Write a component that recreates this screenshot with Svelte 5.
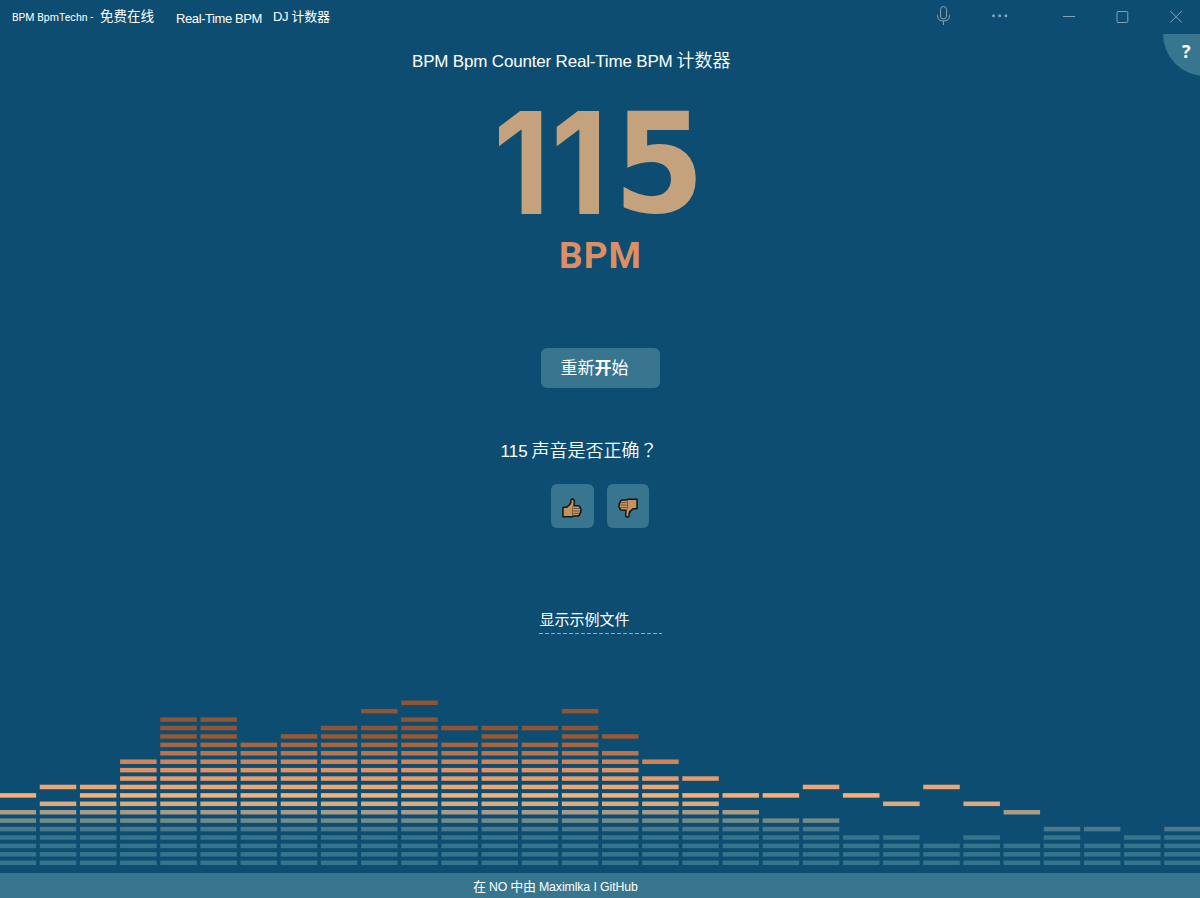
<script>
  const pitch = 40.16;
  const rowPitch = 8.42;
  // [filled rows, peak row]
  const levels = [
    [6, 8], [7, 9], [9, 9], [12, 12], [17, 17], [17, 17], [14, 14], [15, 15], [16, 16], [16, 18],
    [17, 19], [14, 16], [16, 16], [14, 16], [16, 18], [13, 15], [10, 12], [8, 10], [6, 8], [5, 8],
    [5, 9], [3, 8], [3, 7], [2, 9], [3, 7], [2, 6], [4, 4], [2, 4], [3, 3], [4, 4]
  ].map(([fill, peak], c) => [c === 16 ? 10 : c === 17 ? 8 : fill, peak]);
  const colors = [
    '#36748d', '#36748d', '#36748d', '#36748d', '#49798a', '#728b88', '#a89c86', '#dcaa7e', '#f7af78', '#efa673',
    '#e79c6b', '#df9263', '#d28456', '#bd7349', '#a9633e', '#975833', '#925432', '#915330', '#915330', '#915330'
  ];
  const cells = levels.flatMap(([fill, peak], c) =>
    colors.map((color, r) => ({ color, r, x: -0.4 + c * pitch, y: 860.5 - 690 - r * rowPitch }))
      .filter(({ r }) => r <= fill || r === peak)
  );
</script>

{#snippet thumb()}
  <path d="M1 9.3H4.6Q8.3 7 8.9 4.5V2Q9 .9 10.3 .9Q12.4 1 12.4 3.6L11.9 7.8H16Q18.5 8 18 10Q19.8 11 18.7 12.9Q19.3 14.4 17.8 15.4Q18 17.6 16 18H11.5L10 18.8H1Z" fill="#c4935f" stroke="#101719" stroke-width="1.5" stroke-linejoin="round" />
  <path d="M10.5 9V17.6M11.3 10.5H17M11.3 13H17.7M11.3 15.4H16.8" fill="none" stroke="#72533e" stroke-width=".9" />
{/snippet}

<div class="app">
  <header class="titlebar">
    <div class="caption">
      <span class="t1">BPM BpmTechn -</span>
      <span class="t2">免费在线</span>
      <span class="t3">Real-Time BPM</span>
      <span class="t4">DJ 计数器</span>
    </div>
    <svg class="controls" width="270" height="34" fill="none" stroke="#7fa5b9" stroke-width="1">
      <rect x="10.5" y="6.5" width="6" height="12.5" rx="3" />
      <path d="M7.5 14.5v1q0 5.5 6 5.5t6-5.5v-1M13.5 21v4" />
      <g fill="#7fa5b9" stroke="none">
        <circle cx="63.5" cy="15.7" r="1.5" /><circle cx="69.7" cy="15.7" r="1.5" /><circle cx="75.9" cy="15.7" r="1.5" />
      </g>
      <path d="M133 16.5h12" />
      <rect x="187" y="11.5" width="10.8" height="11" rx="1" />
      <path d="M240.3 11l11.5 11.5M251.8 11l-11.5 11.5" />
    </svg>
  </header>
  <button class="help" aria-label="?"><span>?</span></button>

  <main>
    <h1><span class="h-latin">BPM Bpm Counter Real-Time BPM</span><span class="h-cjk">计数器</span></h1>
    <div class="value"><span class="ones">11</span><span class="five">5</span></div>
    <div class="unit">BPM</div>
    <button class="restart">重新<b>开</b>始</button>
    <p class="question"><span>115</span><span class="q-cjk">声音是否正确<i>？</i></span></p>
    <div class="votes">
      <button aria-label="👍"><svg width="20" height="20" viewBox="0 0 20 20">{@render thumb()}</svg></button>
      <button aria-label="👎"><svg class="down" width="20" height="20" viewBox="0 0 20 20">{@render thumb()}</svg></button>
    </div>
    <a class="samples" href="#samples">显示示例文件</a>
  </main>

  <svg class="equalizer" width="1200" height="183">
    {#each cells as cell}
      <rect x={cell.x} y={cell.y} width="36.5" height="4.5" fill={cell.color} />
    {/each}
  </svg>
  <footer><span class="cjk">在</span><span>NO</span><span class="cjk">中由</span><span>Maximlka I GitHub</span></footer>
</div>

<style>
  :global(body) { margin: 0; background: #0d4d72; }
  .app { position: relative; width: 1200px; height: 898px; overflow: hidden; display: flex; flex-direction: column; background: #0d4d72; color: #fff; font-family: "Liberation Sans", "Noto Sans CJK SC", sans-serif; }
  button { border: 0; padding: 0; color: inherit; background: #38758e; font: inherit; }
  .titlebar { height: 34px; display: flex; justify-content: space-between; flex: none; }
  .caption { display: flex; align-items: baseline; padding-left: 12px; line-height: 34px; white-space: nowrap; }
  .t1 { width: 88px; font: 10.5px/34px Roboto, sans-serif; letter-spacing: .05px; }
  .t2 { width: 76px; font-size: 13.5px; }
  .t3 { position: relative; top: 2px; width: 97px; font-size: 13px; letter-spacing: -.4px; }
  .t4 { font-size: 13px; letter-spacing: -.3px; }
  .help { position: absolute; right: -5px; top: 34px; width: 42px; height: 42px; border-radius: 0 0 0 42px; font: 700 18px/35px "Open Sans", sans-serif; text-align: left; padding: 0 0 8px 19px; }
  main { flex: 1; min-height: 0; display: flex; flex-direction: column; align-items: center; }
  h1 { display: flex; gap: 4px; align-items: baseline; margin: 14px 0 0; width: 376px; height: 26px; line-height: 26px; font-size: 17px; font-weight: 400; white-space: nowrap; }
  .h-latin { letter-spacing: -.18px; }
  .h-cjk { font-size: 18px; font-weight: 350; }
  .value { display: flex; align-items: baseline; height: 146px; margin-top: 15px; width: 214px; color: #c5a27e; white-space: nowrap; }
  .ones { width: 125px; font: 700 142px/146px Inter, sans-serif; letter-spacing: 1px; transform: scaleX(.93); transform-origin: left; }
  .five { font: 700 139px/146px "DejaVu Sans Condensed", "DejaVu Sans", sans-serif; font-stretch: condensed; transform: translate(-4.5px, -2px) scaleX(1.05); transform-origin: left; }
  .unit { height: 42px; margin-top: 0; padding-left: 1px; color: #dc8f62; font: 700 37px/42px Roboto, sans-serif; letter-spacing: 1px; }
  .restart { width: 119px; height: 40px; margin-top: 71px; border-radius: 6px; font-size: 17px; line-height: 40px; text-align: left; padding: 1px 0 0 20px; }
  .question { display: flex; gap: 4px; width: 199px; margin: 47px 0 0; height: 30px; font-size: 17px; line-height: 28px; align-items: baseline; white-space: nowrap; }
  .q-cjk { font-size: 18px; font-weight: 350; }
  .q-cjk i { font-style: normal; font-family: "Noto Sans CJK TC", sans-serif; }
  .votes { display: flex; gap: 13px; margin-top: 19px; }
  .votes button { width: 42.5px; height: 44px; border-radius: 6px; display: flex; align-items: center; justify-content: center; padding: 4px 0 0; }
  .down { transform: rotate(180deg); }
  .samples { width: 123px; height: 24px; margin-top: 82px; padding-left: 1px; box-sizing: border-box; color: #fff; text-decoration: none; font-size: 15px; line-height: 20px; background: repeating-linear-gradient(90deg, #c49d88 0 4px, transparent 4px 6px) left bottom / 100% 1px no-repeat; }
  .equalizer { flex: none; display: block; }
  footer { height: 25px; flex: none; display: flex; gap: 3px; align-items: baseline; padding-left: 473px; background: #38758e; font-size: 12.3px; line-height: 27px; letter-spacing: -.1px; }
  .cjk { font-size: 13px; }
</style>
